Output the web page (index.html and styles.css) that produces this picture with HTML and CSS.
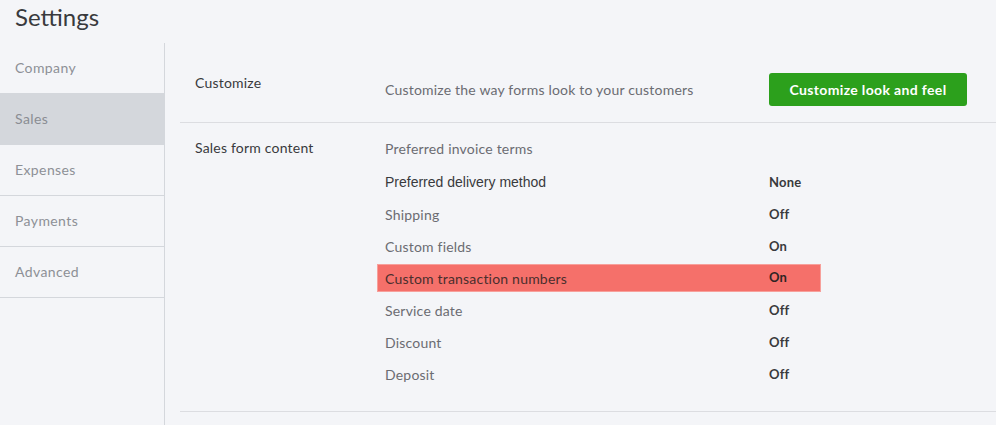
FILE: index.html
```html
<!DOCTYPE html>
<html lang="en">

<head>
    <meta charset="UTF-8">
    <title>Settings</title>
    <link rel="stylesheet" href="styles.css">
</head>

<body>
    <h1 class="page-title">Settings</h1>

    <div class="layout">
        <ul class="side-nav">
            <li>Company</li>
            <li class="active">Sales</li>
            <li>Expenses</li>
            <li>Payments</li>
            <li>Advanced</li>
        </ul>

        <div class="content">
            <div class="section section-customize">
                <div class="section-label">Customize</div>
                <div class="section-body">
                    <span class="desc">Customize the way forms look to your customers</span>
                    <button class="btn-green">Customize look and feel</button>
                </div>
            </div>

            <div class="section section-form">
                <div class="section-label">Sales form content</div>
                <ul class="setting-list">
                    <li class="first"><span class="name">Preferred invoice terms</span><span class="value"></span></li>
                    <li><span class="name arial">Preferred delivery method</span><span class="value">None</span></li>
                    <li><span class="name">Shipping</span><span class="value">Off</span></li>
                    <li><span class="name">Custom fields</span><span class="value">On</span></li>
                    <li class="highlight"><span class="name">Custom transaction numbers</span><span class="value">On</span></li>
                    <li><span class="name">Service date</span><span class="value">Off</span></li>
                    <li><span class="name">Discount</span><span class="value">Off</span></li>
                    <li><span class="name">Deposit</span><span class="value">Off</span></li>
                </ul>
            </div>
        </div>
    </div>
</body>

</html>
```

FILE: styles.css
```css
* {
    margin: 0;
    padding: 0;
    box-sizing: border-box;
}

ul li {
    list-style: none;
}

body {
    background: #f4f5f8;
    font-family: Lato, "Open Sans", sans-serif;
    font-size: 14px;
    letter-spacing: 0.2px;
    color: #393a3d;
    overflow: hidden;
}

.page-title {
    height: 43px;
    padding-left: 15px;
    font-size: 24px;
    font-weight: 400;
    letter-spacing: 0;
    line-height: 34px;
    color: #393a3d;
}

.layout {
    display: flex;
    height: calc(100vh - 43px);
}

.side-nav {
    width: 165px;
    border-right: 1px solid #d4d7dc;
}

.side-nav li {
    height: 51px;
    line-height: 50px;
    padding-left: 15px;
    border-bottom: 1px solid #d4d7dc;
    color: #8d9096;
    letter-spacing: 0.4px;
}

.side-nav li.active {
    background: #d4d7dc;
    color: #8a8d93;
}

.content {
    flex: 1;
    padding-left: 15px;
}

.section {
    display: flex;
    border-bottom: 1px solid #dcdde1;
}

.section-label {
    width: 205px;
    padding-left: 15px;
    line-height: 20px;
    color: #393a3d;
}

.section-customize {
    padding: 30px 0 16px;
}

.section-body {
    display: flex;
    align-items: center;
}

.desc {
    width: 384px;
    color: #6b6c72;
    line-height: 20px;
    padding-top: 1px;
}

.btn-green {
    width: 198px;
    height: 33px;
    border: none;
    border-radius: 3px;
    background: #2ca01c;
    color: #fff;
    font-family: Lato, sans-serif;
    font-size: 14px;
    font-weight: 700;
    letter-spacing: 0.35px;
}

.section-form {
    padding: 15px 0 21px;
}

.setting-list {
    margin-top: -6px;
}

.setting-list li {
    display: flex;
    height: 32px;
    align-items: center;
}

.setting-list li.first {
    margin-bottom: 2px;
}

.setting-list .name {
    width: 384px;
    color: #6b6c72;
}

.setting-list .name.arial {
    font-family: "Liberation Sans", Arial, sans-serif;
    letter-spacing: 0;
    color: #393a3d;
}

.setting-list .value {
    font-weight: 700;
    font-size: 13px;
    color: #393a3d;
}

.setting-list li.highlight {
    height: 28px;
    margin: 2px 0 2px -8px;
    width: 444px;
    background: #f5706a;
    border: 1px solid #f7a09b;
    padding-left: 7px;
}

.setting-list li.highlight .name {
    color: #4a2e2d;
}

.setting-list li.highlight .value {
    margin-top: -2px;
    color: #2e2424;
}
```
